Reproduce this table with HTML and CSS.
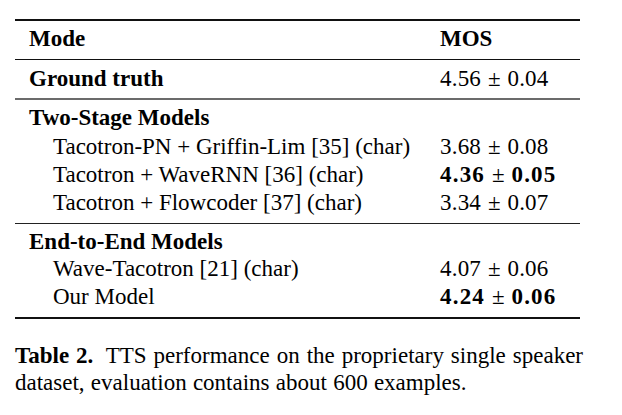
FILE: index.html
```html
<!DOCTYPE html>
<html lang="en">
<head>
<meta charset="utf-8">
<title>Table 2</title>
<link rel="stylesheet" href="styles.css">
</head>
<body>
<div class="tt-sheet">
  <div class="tt-grid">
    <div class="tt-rule tt-rule-heavy"></div>
    <div class="tt-row tt-row-head">
      <div class="tt-c1 tt-b">Mode</div>
      <div class="tt-c2 tt-b">MOS</div>
    </div>
    <div class="tt-rule tt-rule-thin"></div>
    <div class="tt-row tt-row-gt">
      <div class="tt-c1 tt-b">Ground truth</div>
      <div class="tt-c2"><span class="tt-n">4.56</span><span class="tt-pm">±</span><span class="tt-n">0.04</span></div>
    </div>
    <div class="tt-rule tt-rule-mid"></div>
    <div class="tt-group tt-g1">
      <div class="tt-row tt-row-ghead">
        <div class="tt-c1 tt-b">Two-Stage Models</div>
      </div>
      <div class="tt-row tt-row-item">
        <div class="tt-c1 tt-ind">Tacotron-PN + Griffin-Lim [35] (char)</div>
        <div class="tt-c2"><span class="tt-n">3.68</span><span class="tt-pm">±</span><span class="tt-n">0.08</span></div>
      </div>
      <div class="tt-row tt-row-item">
        <div class="tt-c1 tt-ind">Tacotron + WaveRNN [36] (char)</div>
        <div class="tt-c2"><span class="tt-n tt-bn">4.36</span><span class="tt-pm">±</span><span class="tt-n tt-bn">0.05</span></div>
      </div>
      <div class="tt-row tt-row-item">
        <div class="tt-c1 tt-ind">Tacotron + Flowcoder [37] (char)</div>
        <div class="tt-c2"><span class="tt-n">3.34</span><span class="tt-pm">±</span><span class="tt-n">0.07</span></div>
      </div>
    </div>
    <div class="tt-rule tt-rule-thin2"></div>
    <div class="tt-group tt-g2">
      <div class="tt-row tt-row-ghead2">
        <div class="tt-c1 tt-b">End-to-End Models</div>
      </div>
      <div class="tt-row tt-row-item tt-row-wave">
        <div class="tt-c1 tt-ind">Wave-Tacotron [21] (char)</div>
        <div class="tt-c2"><span class="tt-n">4.07</span><span class="tt-pm">±</span><span class="tt-n">0.06</span></div>
      </div>
      <div class="tt-row tt-row-last">
        <div class="tt-c1 tt-ind">Our Model</div>
        <div class="tt-c2"><span class="tt-n tt-bn">4.24</span><span class="tt-pm">±</span><span class="tt-n tt-bn">0.06</span></div>
      </div>
    </div>
    <div class="tt-rule tt-rule-heavy"></div>
  </div>
  <p class="tt-caption"><span class="tt-capb">Table 2.</span> TTS performance on the proprietary single speaker dataset, evaluation contains about 600 examples.</p>
</div>
</body>
</html>
```

FILE: styles.css
```css
body {
  margin: 8px;
  background: #fff;
  font-family: "Times New Roman", "Liberation Serif", Tinos, serif;
}

.tt-sheet {
  padding: 11px 0 0 7px;
  width: 570px;
  color: #000;
  font-family: "Times New Roman", "Liberation Serif", Tinos, serif;
}

.tt-grid {
  width: 565px;
  display: flex;
  flex-direction: column;
}

.tt-rule { width: 100%; }
.tt-rule-heavy { height: 2px; background: #111; }
.tt-rule-thin { height: 1px; background: #111; }
.tt-rule-mid { height: 2px; background: #6b6b6b; }
.tt-rule-thin2 { height: 1px; background: #222; }

.tt-row {
  display: flex;
  align-items: flex-start;
}

.tt-c1,
.tt-c2 {
  font-family: "Times New Roman", "Liberation Serif", Tinos, serif;
  font-size: 23px;
  white-space: nowrap;
}

.tt-c1 {
  width: 411px;
  padding-left: 14px;
}

.tt-c1.tt-ind {
  width: 387px;
  padding-left: 38px;
}

.tt-b { font-weight: bold; }

.tt-row-head { height: 38px; padding-top: 6px; box-sizing: border-box; line-height: 23px; }
.tt-row-gt { height: 38px; padding-top: 7px; box-sizing: border-box; line-height: 23px; }
.tt-row-ghead { height: 33px; padding-top: 6px; box-sizing: border-box; line-height: 23px; }
.tt-row-item { height: 28px; line-height: 28px; }
.tt-row-ghead2 { height: 29px; padding-top: 6px; box-sizing: border-box; line-height: 23px; }
.tt-row-wave { margin-top: 2px; }
.tt-row-last { height: 27px; line-height: 27px; }

.tt-g1 { padding-bottom: 6px; }
.tt-g2 { padding-bottom: 7px; }

.tt-n { letter-spacing: 0.2px; }
.tt-bn { font-weight: bold; letter-spacing: 1.2px; }

.tt-pm {
  display: inline-block;
  margin: 0 0.3em;
  font-weight: normal;
}

.tt-caption {
  margin: 23px 0 0 0;
  width: 568px;
  font-family: "Times New Roman", "Liberation Serif", Tinos, serif;
  font-size: 23px;
  line-height: 27px;
  text-align: justify;
  word-spacing: 0.5px;
}

.tt-capb { font-weight: bold; margin-right: 0.25em; }
```
